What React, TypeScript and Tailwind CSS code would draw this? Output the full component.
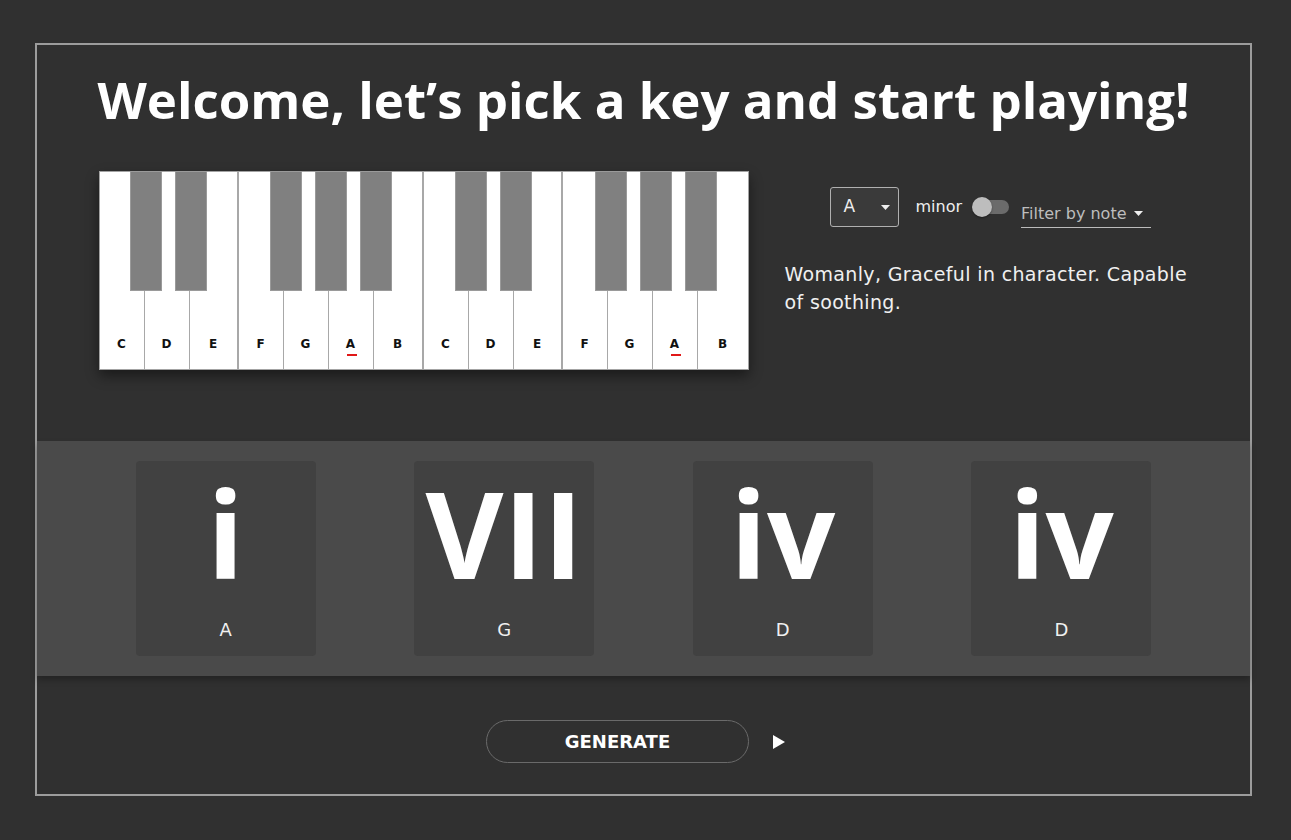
import React from 'react';

const whiteKeys = [
  { n: 'C', w: 'w-[45px]', b: 'border-r' },
  { n: 'D', w: 'w-[45px]', b: 'border-r' },
  { n: 'E', w: 'w-[49px]', b: 'border-r-2' },
  { n: 'F', w: 'w-[45px]', b: 'border-r' },
  { n: 'G', w: 'w-[45px]', b: 'border-r' },
  { n: 'A', w: 'w-[45px]', b: 'border-r' },
  { n: 'B', w: 'w-[50px]', b: 'border-r-2' },
];

const blackKeys = [
  'left-[30px]', 'left-[75px]', 'left-[170px]', 'left-[215px]', 'left-[260px]',
  'left-[355px]', 'left-[400px]', 'left-[495px]', 'left-[540px]', 'left-[585px]',
];

const chords = [
  { num: 'i', note: 'A' },
  { num: 'VII', note: 'G' },
  { num: 'iv', note: 'D' },
  { num: 'iv', note: 'D' },
];

const Piano: React.FC = () => {
  const keys = [...whiteKeys, ...whiteKeys];
  return (
    <div className="relative flex h-[199px] w-[650px] shrink-0 border border-[#a3a3a3] bg-white shadow-[0_6px_12px_rgba(0,0,0,0.45)]">
      {keys.map((k, i) => (
        <div
          key={i}
          className={`${k.w} ${i === keys.length - 1 ? '' : k.b} flex h-full items-end justify-center border-[#a8a8a8] pb-[18px]`}
        >
          <span className="relative text-[12px] font-bold leading-[14px] text-[#111]">
            {k.n}
            {k.n === 'A' && (
              <span className="absolute bottom-[-5px] left-[1px] h-[2px] w-[10px] bg-[#e01818]" />
            )}
          </span>
        </div>
      ))}
      {blackKeys.map((l, i) => (
        <div
          key={i}
          className={`absolute top-[-1px] ${l} h-[120px] w-[32px] border border-[#9a9a9a] bg-[#808080]`}
        />
      ))}
    </div>
  );
};

const Caret: React.FC<{ color: string }> = ({ color }) => (
  <svg width="9" height="5" viewBox="0 0 9 5">
    <path d="M0 0 L9 0 L4.5 5 Z" fill={color} />
  </svg>
);

export default function App() {
  return (
    <div className="min-h-[840px] bg-[#303030] pl-[35px] pt-[43px] font-['DejaVu_Sans',sans-serif] text-white">
      <div className="flex h-[753px] w-[1217px] flex-col border-2 border-[#9c9c9c]">
        <h1 className="mt-[24px] whitespace-nowrap text-center font-['Open_Sans',sans-serif] text-[51px] font-bold leading-[60px] text-white">
          Welcome, let’s pick a key and start playing!
        </h1>

        <div className="mt-[42px] flex justify-center gap-[36px]">
          <Piano />
          <div className="flex w-[404px] flex-col">
            <div className="ml-[45px] mt-[16px] flex items-start">
              <div className="flex h-[40px] w-[69px] items-center justify-between rounded-[3px] border border-[#b0b0b0] bg-[#3a3a3a] pl-[13px] pr-[8px]">
                <span className="text-[17px] text-[#eee]">A</span>
                <Caret color="#eee" />
              </div>
              <span className="ml-[17px] mt-[8px] text-[16px] leading-[24px] text-[#eee]">minor</span>
              <div className="relative ml-[10px] mt-[10px] h-[20px] w-[37px]">
                <div className="absolute left-[3px] top-[3px] h-[14px] w-[34px] rounded-full bg-[#6b6b6b]" />
                <div className="absolute left-0 top-0 h-[20px] w-[20px] rounded-full bg-[#bdbdbd] shadow-[0_1px_2px_rgba(0,0,0,0.4)]" />
              </div>
              <div className="ml-[12px] mt-[13px] flex h-[28px] w-[130px] items-center justify-between border-b border-[#bbb] pr-[8px]">
                <span className="text-[16px] text-[#bdbdbd]">Filter by note</span>
                <Caret color="#eee" />
              </div>
            </div>
            <p className="mt-[32px] text-[19px] leading-[28px] tracking-[0.35px] text-[#f0f0f0]">
              Womanly, Graceful in character. Capable of soothing.
            </p>
          </div>
        </div>

        <div className="mt-[71px] flex h-[235px] justify-evenly bg-[#4a4a4a] py-[20px] shadow-[0_4px_6px_rgba(0,0,0,0.25)]">
          {chords.map((c, i) => (
            <div key={i} className="flex h-[195px] w-[180px] flex-col items-center rounded-[4px] bg-[#414141]">
              <div className="h-[138px] pt-[12px] font-['Open_Sans',sans-serif] text-[120px] font-bold leading-none text-white">{c.num}</div>
              <div className="mt-[19px] text-[18px] leading-[24px] text-[#f0f0f0]">{c.note}</div>
            </div>
          ))}
        </div>

        <div className="mt-[44px] flex items-center justify-center gap-[24px] pr-[16px]">
          <button className="h-[43px] w-[263px] rounded-full border border-[#6a6a6a] text-[18px] font-bold text-white">
            GENERATE
          </button>
          <svg width="12" height="14" viewBox="0 0 12 14">
            <path d="M0 0 L12 7 L0 14 Z" fill="#fff" />
          </svg>
        </div>
      </div>
    </div>
  );
}
